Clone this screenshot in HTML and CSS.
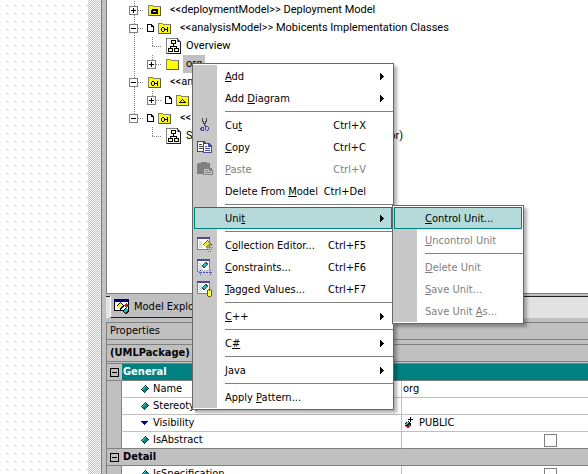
FILE: index.html
```html
<!DOCTYPE html>
<html lang="en">
<head>
<meta charset="utf-8">
<title>Model Explorer</title>
<link rel="stylesheet" href="styles.css">
</head>
<body>
<svg class="defs" aria-hidden="true">
  <symbol id="folder" viewBox="0 0 13 11">
    <path d="M0 0h5v1h8v10H0z" fill="#808080"/>
    <path d="M1 1h4v1h7v8H1z" fill="#ff0"/>
    <path d="M12 2h1v9h-1zM1 10h12v1H1z" fill="#606000"/>
  </symbol>
  <symbol id="folder-deploy" viewBox="0 0 13 11">
    <use href="#folder" width="13" height="11"/>
    <path d="M4 4h6v1H4zM3 5h7v4H3z" fill="#000"/><path d="M5 6h3v1H5z" fill="#ff0"/>
  </symbol>
  <symbol id="folder-analysis" viewBox="0 0 13 11">
    <use href="#folder" width="13" height="11"/>
    <path d="M4 4h2v1H4zM3 5h1v3H3zM6 5h1v3H6zM4 8h2v1H4zM7 6h2v1H7zM9 4h1v5H9z" fill="#000"/>
  </symbol>
  <symbol id="folder-sub" viewBox="0 0 13 11">
    <use href="#folder" width="13" height="11"/>
    <path d="M6 4h1v1H6zM5 5h1v1H5zM7 5h1v1H7zM4 6h1v1H4zM8 6h1v1H8zM3 7h7v1H3z" fill="#000"/>
  </symbol>
  <symbol id="page" viewBox="0 0 7 8">
    <path d="M0 0h5v1h1v1h1v6H0z" fill="#000"/><path d="M1 1h3v2h2v4H1z" fill="#fff"/>
  </symbol>
  <symbol id="diagram" viewBox="0 0 15 16">
    <path d="M0 0h12v1h1v1h1v1h1v13H0z" fill="#808080"/><path d="M1 1h10v3h3v11H1z" fill="#fff"/>
    <path d="M14 3h1v13H1v-1h13zM11 0h1v4h3v-1h-2v-1h-1z" fill="#202020"/>
    <path d="M5 2h5v4H8v2h3v2h2v4H8v-4h2V9H5v1h2v4H2v-4h2V8h3V6H5z" fill="#000"/>
    <path d="M6 3h3v2H6zM3 11h3v2H3zM9 11h3v2H9z" fill="#ff8"/>
  </symbol>
  <symbol id="diamond" viewBox="0 0 8 8">
    <path d="M4 0h1v1h1v1h1v1h1v1H7v1H6v1H5v1H4v1H3V7H2V6H1V5H0V4h1V3h1V2h1V1h1z" fill="#003838"/>
    <path d="M4 1h1v1h1v1h1v1H6v1H5v1H4v1H3V6H2V5H1V4h1V3h1V2h1z" fill="#008c88"/>
    <path d="M4 1h1v1H4zM3 2h1v1H3zM2 3h1v1H2zM1 4h1v1H1z" fill="#60d0c8"/>
  </symbol>
  <symbol id="arrow" viewBox="0 0 4 7">
    <path d="M0 0h1v1h1v1h1v1h1v1H3v1H2v1H1v1H0z" fill="#000"/>
  </symbol>
  <symbol id="window" viewBox="0 0 16 16">
    <path d="M0 0h13v13H0z" fill="#808080"/><path d="M1 2h11v10H1z" fill="#fff"/><path d="M0 0h13v2H0z" fill="#4848a8"/>
    <path d="M2 4h1v1H2zM4 4h1v1H4zM3 5h1v1H3zM2 6h1v1H2zM4 6h1v1H4zM3 7h1v1H3zM2 8h1v1H2zM4 8h1v1H4zM3 9h1v1H3zM2 10h1v1H2zM4 10h1v1H4z" fill="#c0c0c0"/>
  </symbol>
</svg>
<div class="app">
  <div class="canvas"><div class="sheet"></div><div class="margin"></div></div>
  <div class="splitter"></div>
  <main class="side">
    <section class="tree">
      <div class="row top"><i class="box plus"></i><i class="lead"></i><svg class="folder"><use href="#folder-deploy"/></svg><span class="label">&lt;&lt;deploymentModel&gt;&gt; Deployment Model</span></div>
      <div class="row top"><i class="box"></i><i class="lead"></i><svg class="page"><use href="#page"/></svg><svg class="folder"><use href="#folder-analysis"/></svg><span class="label">&lt;&lt;analysisModel&gt;&gt; Mobicents Implementation Classes</span></div>
      <div class="row top sub"><i class="branch"></i><svg class="diagram"><use href="#diagram"/></svg><span class="label near">Overview</span></div>
      <div class="row top sub"><i class="box plus"></i><i class="lead"></i><svg class="folder wide"><use href="#folder"/></svg><span class="label selected">org</span></div>
      <div class="row top"><i class="box"></i><i class="lead"></i><svg class="folder"><use href="#folder-analysis"/></svg><span class="label">&lt;&lt;an</span></div>
      <div class="row top sub"><i class="box plus"></i><i class="lead"></i><svg class="page"><use href="#page"/></svg><svg class="folder"><use href="#folder-sub"/></svg></div>
      <div class="row last"><i class="box"></i><i class="lead"></i><svg class="page"><use href="#page"/></svg><svg class="folder"><use href="#folder-analysis"/></svg><span class="label">&lt;&lt;</span></div>
      <div class="row sub end"><i class="branch"></i><svg class="diagram"><use href="#diagram"/></svg><span class="label near split"><span>S</span><span>or)</span></span></div>
    </section>
    <div class="tabs">
      <button class="tab" type="button">
        <svg class="tabicon" viewBox="0 0 16 16"><path d="M0 0h15v12H0z" fill="#000"/><path d="M1 3h13v8H1z" fill="#fff"/><path d="M0 0h15v3H0z" fill="#000080"/>
          <path d="M6 3l4 4-4 4-4-4z" fill="#000"/><path d="M6 4l3 2-4 4-2-3z" fill="#ff0"/><path d="M12 4l3 2-2 3-3-2z" fill="#c02020"/><path d="M11 9l4 3-3 4-3-3z" fill="#000"/><path d="M12 9l2 2-3 3-1-2z" fill="#00c8c8"/></svg>
        Model Explorer</button>
    </div>
    <h2 class="title">Properties</h2>
    <div class="object">(UMLPackage)</div>
    <table class="props">
      <colgroup><col class="c-gutter"><col class="c-name"><col></colgroup>
      <tr class="group active"><td><i class="box"></i></td><th colspan="2">General</th></tr>
      <tr><td></td><td><svg class="mark"><use href="#diamond"/></svg>Name</td><td>org</td></tr>
      <tr><td></td><td><svg class="mark"><use href="#diamond"/></svg>Stereotype</td><td></td></tr>
      <tr><td></td><td><svg class="mark" viewBox="0 0 8 8"><path d="M0 2h7v1H6v1H5v1H4v1H3V5H2V4H1V3H0z" fill="#000080"/></svg>Visibility</td>
        <td><svg class="public" viewBox="0 0 10 12"><path d="M6 0h1v2h2v1H7v2H6V3H4V2h2z" fill="#000"/><path d="M4 4h1v1h1v1h1v2H6v1H5v1H4v1H3v-1H2V9H1V6h1V5h2z" fill="#000"/><path d="M3 5h2v1H4v1H3v1H1V7h1V6h1z" fill="#30d8d0"/><path d="M5 7h1v1h1v1H6v1H5v1H3v-1H2V9h2V8h1z" fill="#e01010"/></svg>PUBLIC</td></tr>
      <tr class="tail"><td></td><td><svg class="mark"><use href="#diamond"/></svg><label for="abs">IsAbstract</label></td><td><input id="abs" type="checkbox"></td></tr>
      <tr class="group"><td><i class="box"></i></td><th colspan="2">Detail</th></tr>
      <tr><td></td><td><svg class="mark"><use href="#diamond"/></svg><label for="spec">IsSpecification</label></td><td><input id="spec" type="checkbox"></td></tr>
    </table>
  </main>
</div>

<div class="menu context">
  <button type="button"><span><u>A</u>dd</span><svg class="arrow"><use href="#arrow"/></svg></button>
  <button type="button"><span>Add <u>D</u>iagram</span><svg class="arrow"><use href="#arrow"/></svg></button>
  <hr>
  <button type="button"><svg class="icon" viewBox="0 0 16 16"><path d="M5 1h1v3h1v2h1V4h1V1h1v4H9v2H8v2H7V7H6V5H5z" fill="#484848"/><path d="M7 8h2v1h2v1h1v3h-1v1H9v-1H8V9H7v5H4v-1H3v-2h1v-1h3zM5 11v2h1v-2zM9 10v3h2v-3z" fill="#4848a8"/></svg><span>Cu<u>t</u></span><kbd>Ctrl+X</kbd></button>
  <button type="button"><svg class="icon" viewBox="0 0 16 16"><path d="M0 2h7l2 2v9H0z" fill="#484848"/><path d="M1 3h5v2h2v7H1z" fill="#fff"/><path d="M2 5h3v1H2zM2 7h5v1H2zM2 9h5v1H2z" fill="#484848"/><path d="M6 4h6l3 3v7H6z" fill="#4848a8"/><path d="M7 5h4v3h3v5H7z" fill="#fff"/><path d="M8 7h2v1H8zM8 9h5v1H8zM8 11h5v1H8z" fill="#4848a8"/></svg><span><u>C</u>opy</span><kbd>Ctrl+C</kbd></button>
  <button type="button" disabled><svg class="icon" viewBox="0 0 16 16"><path d="M1 2h3V1h6v1h3v5h2v2h1v5H6v-1H0V3h1z" fill="#808080"/><path d="M7 8h5v2h3v3H7z" fill="#c8c8c8"/><path d="M8 9h3v1H8zM8 11h6v1H8z" fill="#808080"/></svg><span><u>P</u>aste</span><kbd>Ctrl+V</kbd></button>
  <button type="button"><span>Delete From <u>M</u>odel</span><kbd>Ctrl+Del</kbd></button>
  <hr>
  <button type="button" class="hot"><span>Uni<u>t</u></span><svg class="arrow"><use href="#arrow"/></svg></button>
  <hr>
  <button type="button"><svg class="icon" viewBox="0 0 16 16"><use href="#window" width="16" height="16"/><path d="M10 3l5 4-5 5-4-4z" fill="#606040"/><path d="M10 4l2 2-4 4-1-2z" fill="#e8e840"/><path d="M12 6l2 2-4 4-1-2z" fill="#a0a030"/><path d="M14 8h1v1h-1zM13 10h1v1h-1zM15 10h1v1h-1zM12 12h1v1h-1zM14 12h1v1h-1zM11 14h1v1h-1zM13 14h1v1h-1z" fill="#808080"/></svg><span>C<u>o</u>llection Editor...</span><kbd>Ctrl+F5</kbd></button>
  <button type="button"><svg class="icon" viewBox="0 0 16 16"><use href="#window" width="16" height="16"/><path d="M8 3h2v1h1v2h-1v1H9v1H8v1H6V8H5V6h1V5h1V4h1z" fill="#484848"/><path d="M8 4h1v1h1v1H9v1H8v1H7V7H6V6h1V5h1z" fill="#30c0c0"/><path d="M2 11h13v5H2z" fill="#c8c8c8"/><path d="M3 11h1v1H3zM2 13h3v1H2zM3 15h1v1H3zM6 13h2v1H6zM9 13h2v1H9zM12 13h3v1h-3zM13 11h1v1h-1zM13 15h1v1h-1z" fill="#4848a8"/></svg><span><u>C</u>onstraints...</span><kbd>Ctrl+F6</kbd></button>
  <button type="button"><svg class="icon" viewBox="0 0 16 16"><use href="#window" width="16" height="16"/><path d="M8 3h2v1h1v2h-1v1H9v1H8v1H6V8H5V6h1V5h1V4h1z" fill="#484848"/><path d="M8 4h1v1h1v1H9v1H8v1H7V7H6V6h1V5h1z" fill="#30c0c0"/><path d="M11 8h3v1h1v6h-1v1h-3v-1h-1V9h1z" fill="#606020"/><path d="M11 9h3v6h-3z" fill="#ff4"/><path d="M12 9h1v1h-1z" fill="#606020"/></svg><span><u>T</u>agged Values...</span><kbd>Ctrl+F7</kbd></button>
  <hr>
  <button type="button"><span><u>C</u>++</span><svg class="arrow"><use href="#arrow"/></svg></button>
  <hr>
  <button type="button"><span>C<u>#</u></span><svg class="arrow"><use href="#arrow"/></svg></button>
  <hr>
  <button type="button"><span><u>J</u>ava</span><svg class="arrow"><use href="#arrow"/></svg></button>
  <hr>
  <button type="button"><span>Apply <u>P</u>attern...</span></button>
</div>
<div class="menu submenu">
  <button type="button" class="hot"><span><u>C</u>ontrol Unit...</span></button>
  <button type="button" disabled><span><u>U</u>ncontrol Unit</span></button>
  <hr>
  <button type="button" disabled><span><u>D</u>elete Unit</span></button>
  <button type="button" disabled><span><u>S</u>ave Unit...</span></button>
  <button type="button" disabled><span>Save Unit <u>A</u>s...</span></button>
</div>
</body>
</html>
```
FILE: styles.css
```css
* { box-sizing: border-box; }
html, body { height: 100%; margin: 0; overflow: hidden; }
body, button, table, h2 {
  font: 11px/16px "DejaVu Sans Condensed", "Liberation Sans", sans-serif;
  color: #000;
}
svg { display: block; flex: none; shape-rendering: crispEdges; }
.defs { position: absolute; width: 0; height: 0; }

.app { display: flex; height: 100%; background: #c0c0c0; }
.canvas { display: flex; flex: 0 0 101px; background: #fff; }
.sheet {
  flex: 1;
  background: conic-gradient(from 90deg at 7px 7px, #c0c0c0 90deg, transparent 0) 0 -2px / 8px 8px;
}
.margin {
  flex: 0 0 13px;
  background: repeating-conic-gradient(#c0c0c0 0 25%, #fff 0 50%) 0 0 / 2px 2px;
}
.splitter { flex: 0 0 6px; border: solid #808080; border-width: 0 1px; }
.side { flex: 1; min-width: 0; display: flex; flex-direction: column; margin-left: -1px; }

.tree {
  flex: 0 0 294px;
  padding-top: 1px;
  background: #fff;
  border: solid #808080;
  border-width: 0 0 1px 1px;
  font-family: Roboto, "Liberation Sans", sans-serif;
}
.row { display: flex; align-items: center; height: 18px; padding-left: 22px; white-space: nowrap; }
.row.sub { padding-left: 40px; }
.row.top { background: repeating-linear-gradient(#808080 0 1px, transparent 1px 2px) 27px 0 / 1px 100% no-repeat; }
.row.last { background: repeating-linear-gradient(#808080 0 1px, transparent 1px 2px) 27px 0 / 1px 9px no-repeat; }
.row.top.sub {
  background:
    repeating-linear-gradient(#808080 0 1px, transparent 1px 2px) 27px 0 / 1px 100% no-repeat,
    repeating-linear-gradient(#808080 0 1px, transparent 1px 2px) 45px 0 / 1px 10px no-repeat;
}
.row.end { background: repeating-linear-gradient(#808080 0 1px, transparent 1px 2px) 45px 0 / 1px 10px no-repeat; }
.box {
  flex: none;
  display: block;
  width: 9px;
  height: 9px;
  border: 1px solid #808080;
  background: linear-gradient(#000, #000) 1px 3px / 5px 1px no-repeat, #fff;
}
.box.plus {
  background:
    linear-gradient(#000, #000) 1px 3px / 5px 1px no-repeat,
    linear-gradient(#000, #000) 3px 1px / 1px 5px no-repeat,
    #fff;
}
.lead, .branch { flex: none; height: 1px; background: repeating-linear-gradient(90deg, #808080 0 1px, transparent 1px 2px); }
.lead { width: 5px; margin-right: 5px; }
.branch { width: 9px; margin: 0 5px; }
.folder { width: 13px; height: 11px; }
.page { width: 7px; height: 8px; margin-right: 4px; margin-left: -1px; }
.diagram { width: 15px; height: 16px; }
.label { margin-left: 6px; padding: 0 3px; line-height: 18px; }
.label.near { margin-left: 2px; }
.label.selected { margin-left: 4px; background: #c0c0c0; }
.split { display: flex; flex: 0 0 223px; justify-content: space-between; }

.tabs { flex: 0 0 28px; display: flex; padding: 2px 0 4px 4px; background: linear-gradient(#202020, #202020) 0 2px / 100% 1px no-repeat, linear-gradient(#c0c0c0 3px, #e2e2e2 3px 24px, #c0c0c0 24px); }
.tab {
  display: flex;
  align-items: center;
  gap: 4px;
  padding: 0 8px 0 3px;
  border: solid #202020;
  border-width: 0 1px 1px 0;
  border-left: 1px solid #fff;
  background: #c0c0c0;
}
.tabicon { width: 16px; height: 16px; }
.title, .object { flex: 0 0 18px; margin: 0; padding-left: 3px; border: solid #808080; border-width: 1px 0 1px 1px; }
.title { border-radius: 2px 0 0 2px; margin-bottom: 4px; }
.object { margin-bottom: 1px; font-weight: bold; }

.props { width: 100%; table-layout: fixed; border-collapse: separate; border-spacing: 0; border: solid #808080; border-width: 1px 0 0 1px; }
.c-gutter { width: 15px; }
.c-name { width: 280px; }
.props td, .props th { height: 17px; padding: 0; border-bottom: 1px solid #c0c0c0; background: #fff; text-align: left; white-space: nowrap; }
.props td:first-child { border-right: 1px solid #808080; background: #c0c0c0; }
.props td:nth-child(2) { border-right: 1px solid #c0c0c0; }
.props td:nth-child(3) { padding-left: 1px; }
.group td:first-child, .props .group th, .props .tail td { border-bottom-color: #808080; }
.props .group th { background: #c0c0c0; padding-left: 1px; }
.props .group td:first-child { border-right-color: #c0c0c0; }
.props .active th { background: #008080; color: #fff; }
.group .box { margin-left: 3px; background-color: #c0c0c0; border-color: #000; }
.mark { float: left; width: 8px; height: 8px; margin: 4px 4px 0 19px; }
.public { float: left; width: 10px; height: 12px; margin: 2px 5px 0 1px; }
.props input { display: block; appearance: none; width: 13px; height: 13px; margin: 0 0 0 141px; border: 1px solid #808080; background: #fff; }

.menu {
  position: absolute;
  padding: 1px;
  border: 1px solid #666;
  background: linear-gradient(#c8c8c8, #c8c8c8) 0 1px / 24px calc(100% - 2px) no-repeat, #fff;
  box-shadow: 3px 3px 3px rgba(0, 0, 0, .3);
}
.context { left: 192px; top: 63px; width: 202px; }
.submenu { left: 392px; top: 205px; width: 132px; }
.menu button {
  display: grid;
  grid-template-columns: 28px 1fr auto;
  align-items: center;
  width: 100%;
  height: 22px;
  padding: 0 8px 0 3px;
  border: 0;
  background: none;
  text-align: left;
  white-space: nowrap;
}
.menu button > span { grid-column: 2; }
.menu button > span, .menu kbd { padding-top: 2px; }
.menu button:disabled { color: #808080; }
.menu .hot { background: #b4dbd9; outline: 1px solid #008080; outline-offset: -1px; }
.menu .icon { width: 16px; height: 16px; grid-column: 1; }
.menu .arrow { width: 4px; height: 7px; }
.menu kbd { font: inherit; padding-right: 18px; }
.menu hr { margin: 2px -1px 2px 31px; border: 0; height: 1px; background: #808080; }
```
